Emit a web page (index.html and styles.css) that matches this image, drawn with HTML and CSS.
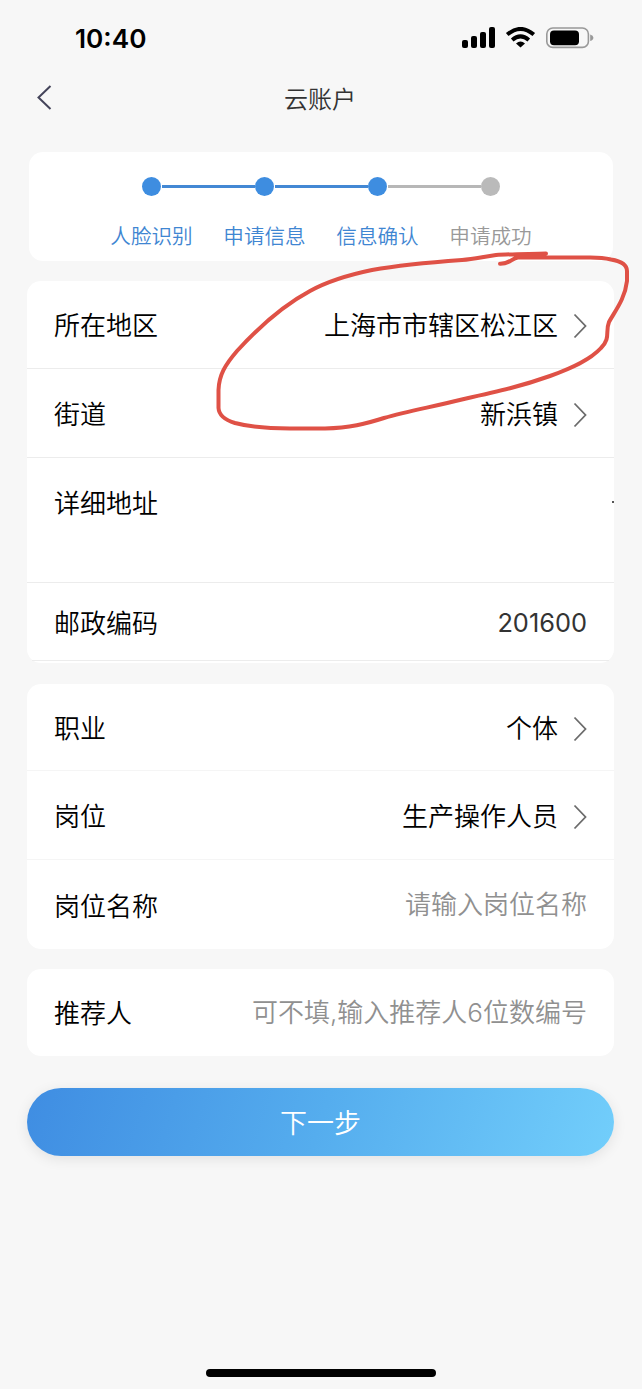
FILE: index.html
```html
<!DOCTYPE html>
<html lang="zh-CN">
<head>
<meta charset="utf-8">
<title>云账户</title>
<link rel="stylesheet" href="styles.css">
</head>
<body>
<div class="screen">
  <header class="status">
    <span class="time">10:40</span>
    <svg class="indicators" width="134" height="24" viewBox="0 0 134 24">
      <rect x="2" y="13" width="6" height="8" rx="2"/>
      <rect x="11" y="9" width="6" height="12" rx="2"/>
      <rect x="20" y="5" width="6" height="16" rx="2"/>
      <rect x="29" y="0" width="6" height="21" rx="2"/>
      <g fill="none" stroke="#000" stroke-width="3.9">
        <path d="M47.2 7.6Q60.5-3.8 73.8 7.6"/>
        <path d="M52.2 13Q60.5 5.8 68.8 13"/>
      </g>
      <path d="M60.5 20.6L56 16.4Q60.5 12.6 65 16.4Z"/>
      <rect x="86.800" y="1" width="41.600" height="19.400" rx="6" fill="none" stroke="#999" stroke-width="1.600"/>
      <rect x="90" y="3.400" width="29" height="14.800" rx="4"/>
      <path d="M130.200 7.500Q133.400 8.600 133.400 10.800T130.200 14Z" fill="#999"/>
    </svg>
  </header>
  <nav class="nav">
    <svg class="back" width="16" height="26" viewBox="0 0 16 26"><path d="M14.500 1L2.500 12.500L14.500 24"/></svg>
    <h1 class="title">云账户</h1>
  </nav>

  <main class="content">
    <section class="card steps">
      <div class="step done"><i class="dot"></i><span>人脸识别</span></div>
      <div class="step done"><i class="dot"></i><span>申请信息</span></div>
      <div class="step done last-done"><i class="dot"></i><span>信息确认</span></div>
      <div class="step"><i class="dot"></i><span>申请成功</span></div>
    </section>

    <section class="card address">
      <div class="row"><span>所在地区</span><span class="value">上海市市辖区松江区</span><svg class="chev" width="14" height="26" viewBox="0 0 14 26"><path d="M1.500 1.500L12.500 13L1.500 24.500"/></svg></div>
      <div class="row street"><span>街道</span><span class="value">新浜镇</span><svg class="chev" width="14" height="26" viewBox="0 0 14 26"><path d="M1.500 1.500L12.500 13L1.500 24.500"/></svg></div>
      <div class="row tall"><span>详细地址</span><i class="speck"></i></div>
      <div class="row postal"><span>邮政编码</span><span class="value number">201600</span></div>
    </section>

    <section class="card job">
      <div class="row"><span>职业</span><span class="value">个体</span><svg class="chev" width="14" height="26" viewBox="0 0 14 26"><path d="M1.500 1.500L12.500 13L1.500 24.500"/></svg></div>
      <div class="row"><span>岗位</span><span class="value">生产操作人员</span><svg class="chev" width="14" height="26" viewBox="0 0 14 26"><path d="M1.500 1.500L12.500 13L1.500 24.500"/></svg></div>
      <div class="row"><span>岗位名称</span><span class="value hint">请输入岗位名称</span></div>
    </section>

    <section class="card referrer">
      <div class="row"><span>推荐人</span><span class="value hint">可不填,输入推荐人6位数编号</span></div>
    </section>

    <button class="next" type="button">下一步</button>
  </main>
  <div class="home"></div>

  <svg class="marker" width="642" height="200" viewBox="0 240 642 200">
    <path d="M546 253.5C530 254 510 254 496 255C482 257 474 259 462 260C434 262 400 265 372 270C348 275 328 281 310 291C282 306 258 328 237 351C225 365 219 375 218.500 390V408C219 416 225 420 235 423C250 427 268 428.500 290 428.500H325C350 428 365 424 384 418C408 411 432 407 464 399C500 391 522 386 550 376C572 368 590 360 601 348C611 338 605 332 609 322C615 311 625 299 627 281V271C627 264 620 261 611 259.500C601 257 594 257.500 585 257.500H518C512 258 510 264 500 263.700"/>
  </svg>
</div>
</body>
</html>
```

FILE: styles.css
```css
* { box-sizing: border-box; }

body {
  margin: 0;
  background: #f7f7f7;
  color: #000;
  font-family: Inter, "Noto Sans CJK SC", sans-serif;
  font-weight: 350;
}

.screen {
  position: relative;
  display: flex;
  flex-direction: column;
  width: 642px;
  height: 1389px;
  overflow: hidden;
}

.status {
  display: flex;
  justify-content: space-between;
  align-items: flex-start;
  height: 76px;
  padding: 22px 48px 0 75px;
}

.time {
  margin-top: 1px;
  font-size: 26.2px;
  font-weight: 600;
  line-height: 32px;
}

.indicators { margin-top: 5px; }

.nav {
  display: grid;
  grid-template-columns: 50px 1fr 50px;
  align-items: center;
  height: 44px;
  padding: 0 36px;
}

.back { fill: none; stroke: #44445a; stroke-width: 2; }

.title {
  margin: 4px 0 0 -2px;
  color: #333;
  font-size: 24px;
  font-weight: 350;
  line-height: 36px;
  text-align: center;
}

.content {
  display: flex;
  flex-direction: column;
  padding: 32px 28px 0 27px;
}

.card {
  background: #fff;
  border-radius: 14px;
}

.steps {
  display: flex;
  justify-content: center;
  height: 109px;
  margin: 0 1px 20px 2px;
  padding-top: 25px;
}

.step {
  display: flex;
  flex-direction: column;
  align-items: center;
  position: relative;
  width: 113px;
  color: #999;
  font-size: 20.6px;
  line-height: 30px;
  white-space: nowrap;
}

.step span { margin-top: 26px; }

.dot {
  width: 19px;
  height: 19px;
  border-radius: 50%;
  background: #bababa;
}

/* Connector to the next step */
.step:not(:last-child)::after {
  content: "";
  position: absolute;
  top: 8px;
  left: 67px;
  width: 93px;
  height: 3px;
  background: #4388d4;
}

.step.last-done::after { background: #b7b7b7 !important; }
.step.done { color: #3f86d2; }
.done .dot { background: #3e8de0; }

.row {
  display: flex;
  align-items: center;
  height: 89px;
  padding: 2px 27px 0;
  border-bottom: 1px solid #ececec;
  font-size: 26px;
  line-height: 38px;
}

.value { margin-left: auto; }
.hint { color: #909090; margin-top: -3px; }
.number { color: #333; font-size: 25.4px; font-weight: 400; margin-top: -2px; }

.chev {
  margin-left: 15px;
  margin-top: 1px;
  fill: none;
  stroke: #6b6b6b;
  stroke-width: 1.8;
}

.address { height: 382px; }
.address .row:first-child { height: 88px; }
.address .street { padding-top: 4px; }
.street .chev { margin-top: 0; }

.address .tall {
  position: relative;
  align-items: flex-start;
  height: 125px;
  padding-top: 27px;
}

.speck {
  position: absolute;
  right: 0;
  top: 43px;
  width: 2px;
  height: 2px;
  background: #555;
}

.address .postal {
  height: 78px;
  margin: 0 5px;
  padding: 4px 22px 0;
}

.job {
  height: 265px;
  margin-top: 21px;
}

.job .row { border-bottom-color: #f5f5f5; padding-top: 4px; }
.job .row:first-child { height: 87px; }
.job .row:last-child { border-bottom: 0; }
.job .chev { margin-top: -1px; }

.referrer {
  height: 87px;
  margin-top: 20px;
}

.referrer .row { height: 87px; border: 0; padding-top: 3px; }

.next {
  height: 68px;
  margin-top: 32px;
  padding: 0 0 2px;
  border: 0;
  border-radius: 34px;
  background: linear-gradient(108deg, #3f8de2 0%, #55adee 50%, #72cefb 100%);
  box-shadow: 0 3px 14px rgba(0, 0, 0, 0.09);
  color: #fff;
  font-family: inherit;
  font-size: 27px;
  font-weight: 350;
}

.home {
  width: 230px;
  height: 8px;
  margin: auto auto 12px 206px;
  border-radius: 4px;
  background: #000;
}

.marker {
  position: absolute;
  top: 240px;
  left: 0;
  fill: none;
  stroke: #df5146;
  stroke-width: 4;
  stroke-linecap: round;
  stroke-linejoin: round;
}
```
